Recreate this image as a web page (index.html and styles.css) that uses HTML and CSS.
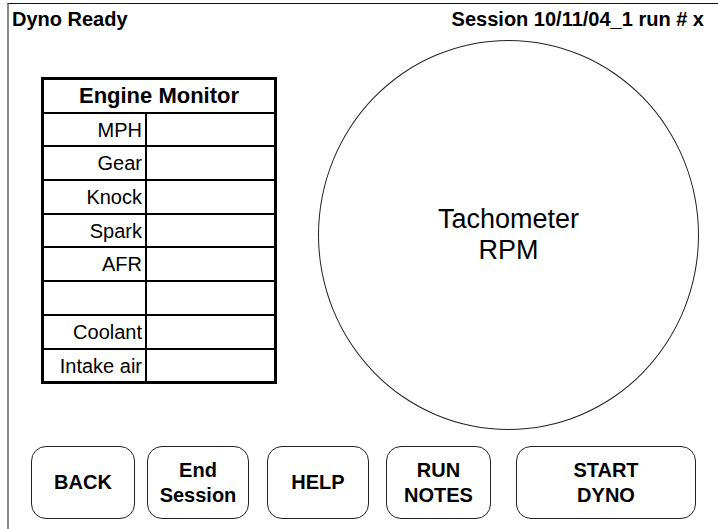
FILE: index.html
```html
<!DOCTYPE html>
<html>
<head>
<meta charset="utf-8">
<title>Dyno</title>
<link rel="stylesheet" href="styles.css">
</head>
<body>
<div class="frame">
  <div class="header">
    <span class="status">Dyno Ready</span>
    <span class="session">Session 10/11/04_1 run # x</span>
  </div>
  <div class="main">
    <div class="monitor">
      <div class="cell title">Engine Monitor</div>
      <div class="cell label">MPH</div><div class="cell value"></div>
      <div class="cell label">Gear</div><div class="cell value"></div>
      <div class="cell label">Knock</div><div class="cell value"></div>
      <div class="cell label">Spark</div><div class="cell value"></div>
      <div class="cell label">AFR</div><div class="cell value"></div>
      <div class="cell label"></div><div class="cell value"></div>
      <div class="cell label">Coolant</div><div class="cell value"></div>
      <div class="cell label last">Intake air</div><div class="cell value last"></div>
    </div>
    <div class="tach">
      <span>Tachometer</span>
      <span>RPM</span>
    </div>
  </div>
  <div class="buttons">
    <div class="btn btn-back">BACK</div>
    <div class="btn btn-end">End<br>Session</div>
    <div class="btn btn-help">HELP</div>
    <div class="btn btn-notes">RUN<br>NOTES</div>
    <div class="btn btn-start">START<br>DYNO</div>
  </div>
</div>
</body>
</html>
```
FILE: styles.css
```css
html, body {
  margin: 0;
  padding: 0;
  background: #fff;
  overflow: hidden;
}
body {
  font-family: "Liberation Sans", Arial, sans-serif;
  color: #000;
}
.frame {
  margin: 3px 0 0 7px;
  border-top: 1px solid #111;
  border-left: 2px solid #8a8a8a;
  height: 530px;
  box-sizing: border-box;
}
.header {
  display: flex;
  justify-content: space-between;
  padding: 4px 14px 0 3px;
  font-size: 20px;
  font-weight: bold;
  line-height: 23px;
}
.main {
  display: flex;
  align-items: flex-start;
  margin-top: 9px;
  padding-left: 32px;
}
.monitor {
  margin-top: 37px;
  width: 236px;
  box-sizing: border-box;
  border: 3px solid #000;
  display: grid;
  grid-template-columns: 103px 1fr;
}
.cell {
  height: 31.7px;
  border-bottom: 2px solid #000;
  font-size: 20px;
  line-height: 32px;
}
.cell.last {
  border-bottom: none;
}
.title {
  grid-column: 1 / 3;
  text-align: center;
  font-weight: bold;
  font-size: 22px;
}
.label {
  border-right: 2px solid #000;
  text-align: right;
  padding-right: 3px;
  white-space: nowrap;
}
.tach {
  margin-left: 41px;
  width: 381px;
  height: 390px;
  box-sizing: border-box;
  border: 1.5px solid #222;
  border-radius: 50%;
  display: flex;
  flex-direction: column;
  align-items: center;
  justify-content: center;
  font-size: 27px;
  line-height: 31px;
}
.buttons {
  display: flex;
  margin-top: 16px;
  padding-left: 22px;
}
.btn {
  height: 73px;
  box-sizing: border-box;
  border: 1px solid #222;
  border-radius: 15px;
  display: flex;
  align-items: center;
  justify-content: center;
  text-align: center;
  font-weight: bold;
  font-size: 20px;
  line-height: 25px;
}
.btn-back { width: 104px; }
.btn-end { width: 102px; margin-left: 12px; }
.btn-help { width: 102px; margin-left: 18px; }
.btn-notes { width: 105px; margin-left: 17px; }
.btn-start { width: 180px; margin-left: 25px; }
```
